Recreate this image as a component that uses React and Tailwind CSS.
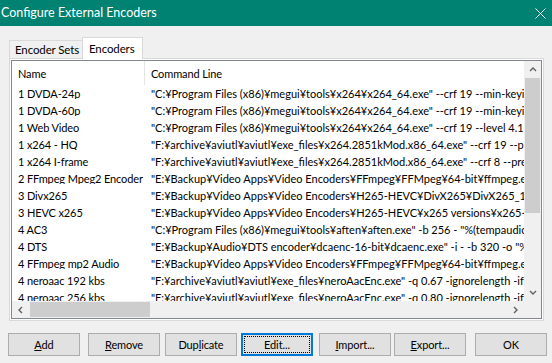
const rows = [
  ["1 DVDA-24p", '"C:¥Program Files (x86)¥megui¥tools¥x264¥x264_64.exe" --crf 19 --min-keyint 24 --keyint 240'],
  ["1 DVDA-60p", '"C:¥Program Files (x86)¥megui¥tools¥x264¥x264_64.exe" --crf 19 --min-keyint 60 --keyint 600'],
  ["1 Web Video", '"C:¥Program Files (x86)¥megui¥tools¥x264¥x264_64.exe" --crf 19 --level 4.1 --preset slow'],
  ["1 x264 - HQ", '"F:¥archive¥aviutl¥aviutl¥exe_files¥x264.2851kMod.x86_64.exe" --crf 19 --preset veryslow'],
  ["1 x264 I-frame", '"F:¥archive¥aviutl¥aviutl¥exe_files¥x264.2851kMod.x86_64.exe" --crf 8 --preset veryslow'],
  ["2 FFmpeg Mpeg2 Encoder", '"E:¥Backup¥Video Apps¥Video Encoders¥FFmpeg¥FFMpeg¥64-bit¥ffmpeg.exe" -i -'],
  ["3 Divx265", '"E:¥Backup¥Video Apps¥Video Encoders¥H265-HEVC¥DivX265¥DivX265_1.3.7¥divx265.exe"'],
  ["3 HEVC x265", '"E:¥Backup¥Video Apps¥Video Encoders¥H265-HEVC¥x265 versions¥x265-1.2¥x265.exe"'],
  ["4 AC3", '"C:¥Program Files (x86)¥megui¥tools¥aften¥aften.exe" -b 256 - "%(tempaudio)"'],
  ["4 DTS", '"E:¥Backup¥Audio¥DTS encoder¥dcaenc-16-bit¥dcaenc.exe" -i - -b 320 -o "%(tempaudio)"'],
  ["4 FFmpeg mp2 Audio", '"E:¥Backup¥Video Apps¥Video Encoders¥FFmpeg¥FFMpeg¥64-bit¥ffmpeg.exe" -i -'],
  ["4 neroaac 192 kbs", '"F:¥archive¥aviutl¥aviutl¥exe_files¥neroAacEnc.exe" -q 0.67 -ignorelength -if -'],
  ["4 neroaac 256 kbs", '"F:¥archive¥aviutl¥aviutl¥exe_files¥neroAacEnc.exe" -q 0.80 -ignorelength -if -'],
];

const Chevron = ({ dir }) => {
  const pts = {
    up: "1,5 4,2 7,5",
    down: "1,2 4,5 7,2",
    left: "5,1 2,4 5,7",
    right: "2,1 5,4 2,7",
  }[dir];
  return (
    <svg width="8" height="8" viewBox="0 0 8 8" className="block">
      <polyline points={pts} fill="none" stroke="#606060" strokeWidth="1.4" />
    </svg>
  );
};

const Btn = ({ children, className = "", focused = false }) => (
  <button
    type="button"
    className={`h-[23px] w-[72px] shrink-0 bg-[#e1e1e1] text-black ${
      focused ? "border-2 border-[#0078d7] p-px" : "border border-[#adadad] p-[2px]"
    } ${className}`}
  >
    <span
      className={`flex h-full w-full items-center justify-center ${
        focused ? "border border-dotted border-black" : ""
      }`}
    >
      {children}
    </span>
  </button>
);

export default function App() {
  return (
    <div className="flex h-[363px] w-[552px] flex-col overflow-hidden bg-[#f0f0f0] font-['Lato',sans-serif] text-[11px] leading-none tracking-[-0.12px] text-black">
      {/* title bar */}
      <div className="flex h-[26px] shrink-0 items-center justify-between bg-[#008272] text-white">
        <span className="pl-px text-[12.5px] tracking-normal">Configure External Encoders</span>
        <svg width="11" height="11" viewBox="0 0 11 11" className="mr-[6px]">
          <path d="M0.5 0.5 L10.5 10.5 M10.5 0.5 L0.5 10.5" stroke="#fff" strokeWidth="1" />
        </svg>
      </div>

      <div className="flex flex-col pl-[9px] pr-[8px] pt-[11px]">
        {/* tabs */}
        <div className="flex h-[21px] items-end">
          <div className="flex h-[18px] w-[74px] items-center whitespace-nowrap border border-b-0 border-[#d9d9d9] bg-[#f0f0f0] pl-[5px] text-[11.5px]">
            Encoder Sets
          </div>
          <div className="relative z-10 -mb-px -ml-px flex h-[22px] w-[61px] items-start whitespace-nowrap border border-b-0 border-[#d9d9d9] bg-white pl-[6px] pt-[5px] text-[11.5px]">
            Encoders
          </div>
        </div>

        {/* tab page */}
        <div className="h-[263px] border border-[#d9d9d9] bg-white p-px">
          <div className="flex h-full flex-col border border-[#828790]">
            <div className="flex h-[240px]">
              <div className="flex min-w-0 flex-1 flex-col overflow-hidden">
                <div className="flex h-[24px] shrink-0 items-center bg-white">
                  <div className="w-[132px] shrink-0 pl-[6px]">Name</div>
                  <div className="h-full w-px bg-[#e5e5e5]" />
                  <div className="whitespace-nowrap pl-[6px]">Command Line</div>
                </div>
                {rows.map(([name, cmd]) => (
                  <div key={name} className="flex h-[17px] shrink-0 items-center whitespace-nowrap">
                    <div className="w-[133px] shrink-0 overflow-hidden pl-[6px]">{name}</div>
                    <div className="pl-[6px] tracking-normal">{cmd}</div>
                  </div>
                ))}
              </div>
              {/* vertical scrollbar */}
              <div className="flex w-[17px] shrink-0 flex-col bg-[#f0f0f0]">
                <div className="flex h-[17px] items-center justify-center">
                  <Chevron dir="up" />
                </div>
                <div className="mx-px h-[135px] bg-[#cdcdcd]" />
                <div className="flex-1" />
                <div className="flex h-[17px] items-center justify-center">
                  <Chevron dir="down" />
                </div>
              </div>
            </div>
            {/* horizontal scrollbar */}
            <div className="flex h-[17px]">
              <div className="flex flex-1 items-center bg-[#f0f0f0]">
                <div className="flex h-[17px] w-[17px] items-center justify-center">
                  <Chevron dir="left" />
                </div>
                <div className="ml-px h-[15px] w-[120px] bg-[#cdcdcd]" />
                <div className="flex-1" />
                <div className="flex h-[17px] w-[17px] items-center justify-center">
                  <Chevron dir="right" />
                </div>
              </div>
              <div className="w-[17px] bg-[#f0f0f0]" />
            </div>
          </div>
        </div>
      </div>

      {/* buttons */}
      <div className="mt-[12px] flex pl-[8px]">
        <Btn className="w-[68px]">
          <span><u>A</u>dd</span>
        </Btn>
        <Btn className="ml-[8px]">
          <span><u>R</u>emove</span>
        </Btn>
        <Btn className="ml-[5px]">
          <span>Dup<u>l</u>icate</span>
        </Btn>
        <Btn className="ml-[4px]" focused>
          <span>Edit...</span>
        </Btn>
        <Btn className="ml-[6px]">
          <span><u>I</u>mport...</span>
        </Btn>
        <Btn className="ml-[3px]">
          <span><u>E</u>xport...</span>
        </Btn>
        <Btn className="ml-[9px]">
          <span>OK</span>
        </Btn>
      </div>
    </div>
  );
}
